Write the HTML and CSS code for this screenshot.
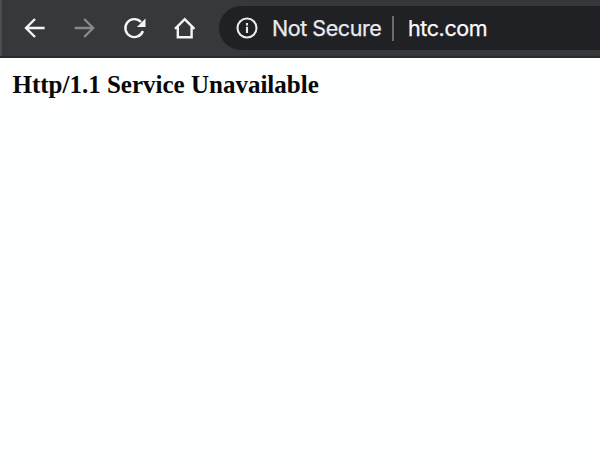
FILE: index.html
```html
<!DOCTYPE html>
<html lang="en">
<head>
<meta charset="utf-8">
<title>htc.com</title>
<link rel="stylesheet" href="styles.css">
</head>
<body>
<header class="toolbar">
  <nav class="nav">
    <svg class="icon" viewBox="0 0 24 24"><path d="M21.6 12H3.5M12 3L3 12l9 9"/></svg>
    <svg class="icon icon-disabled" viewBox="0 0 24 24"><path d="M1.6 12h18.5M11.2 3l9 9-9 9"/></svg>
    <svg class="icon" viewBox="0 0 24 24"><path d="M19.9 15A9 9 0 1 1 18 6"/><path class="solid" d="M22.5 2.4v8.5h-8.6z"/></svg>
    <svg class="icon" viewBox="0 0 24 24"><path d="M2 12.8L11.7 3.2l9.7 9.6M4.8 11v10.2h13.8V11"/></svg>
  </nav>
  <div class="omnibox">
    <svg class="info" viewBox="0 0 24 24"><circle cx="12" cy="12" r="9.5"/><path d="M12 10.8V17M12 7v2.5"/></svg>
    <span class="status">Not Secure</span>
    <span class="divider"></span>
    <span class="url">htc.com</span>
  </div>
</header>
<main class="page">
  <h1 class="message">Http/1.1 Service Unavailable</h1>
</main>
</body>
</html>
```

FILE: styles.css
```css
body {
  margin: 0;
  height: 464px;
  overflow: hidden;
  background: #fdfefe;
}

.toolbar {
  box-sizing: border-box;
  display: flex;
  height: 58px;
  padding: 6px 0 6px 23px;
  border-bottom: 2px solid #2d2a2d;
  background: linear-gradient(to right, #4c4d51 2px, #37383c 2px);
}

.nav {
  display: flex;
  align-items: center;
  gap: 26px;
  width: 196px;
}

.icon,
.info {
  flex: none;
  width: 24px;
  height: 24px;
  fill: none;
  stroke: #f4f5f8;
  stroke-width: 2.4;
}

.icon-disabled {
  stroke: #87888b;
}

.icon .solid {
  fill: #f4f5f8;
  stroke: none;
}

.omnibox {
  box-sizing: border-box;
  display: flex;
  flex: 1;
  align-items: center;
  height: 44px;
  padding-left: 16px;
  border-radius: 22px 0 0 22px;
  background: #202124;
  color: #e9eaee;
  font: 21.5px/44px Inter, "Liberation Sans", sans-serif;
  white-space: nowrap;
}

.info {
  stroke: #e9eaee;
  stroke-width: 2.1;
}

.status {
  width: 120px;
  margin-left: 13px;
  letter-spacing: -0.45px;
  -webkit-text-stroke: 0.25px #e9eaee;
}

.divider {
  width: 1.5px;
  height: 25px;
  background: #6b6c70;
}

.url {
  margin-left: 14.5px;
  color: #fafafc;
  letter-spacing: -0.4px;
  -webkit-text-stroke: 0.25px #fafafc;
}

.page {
  padding: 13px 12.5px;
}

.message {
  margin: 0;
  color: #080808;
  font: bold 25px/28px "Liberation Serif", serif;
}
```
